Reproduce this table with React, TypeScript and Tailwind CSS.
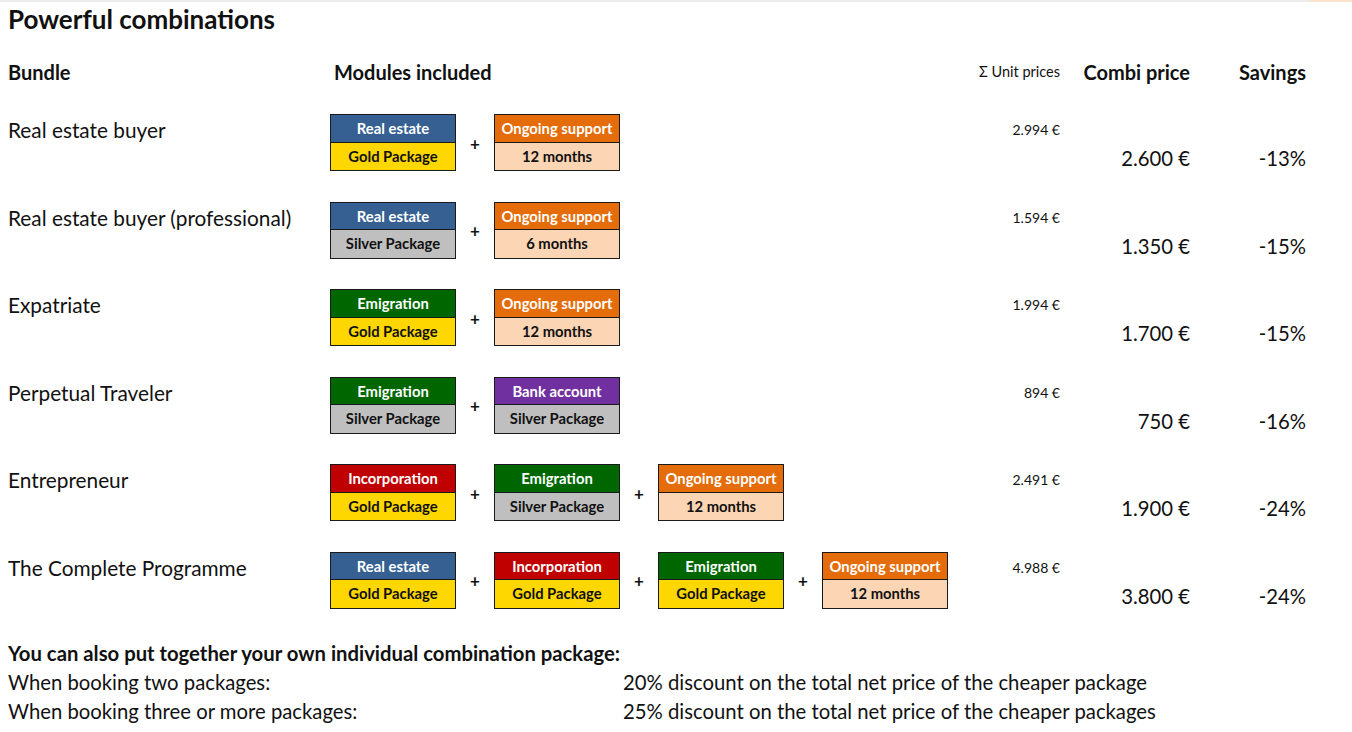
const TOP: Record<string, string> = {
  'Real estate': 'bg-[#366092]',
  'Ongoing support': 'bg-[#e46c0a]',
  Emigration: 'bg-[#006600]',
  'Bank account': 'bg-[#7030a0]',
  Incorporation: 'bg-[#c00000]',
};

const BOTTOM: Record<string, string> = {
  'Gold Package': 'bg-[#ffd700]',
  'Silver Package': 'bg-[#bfbfbf]',
  '12 months': 'bg-[#fcd5b4]',
  '6 months': 'bg-[#fcd5b4]',
};

type Module = [string, string];

type Bundle = {
  name: string;
  modules: Module[];
  unit: string;
  combi: string;
  savings: string;
};

const BUNDLES: Bundle[] = [
  {
    name: 'Real estate buyer',
    modules: [['Real estate', 'Gold Package'], ['Ongoing support', '12 months']],
    unit: '2.994 €',
    combi: '2.600 €',
    savings: '-13%',
  },
  {
    name: 'Real estate buyer (professional)',
    modules: [['Real estate', 'Silver Package'], ['Ongoing support', '6 months']],
    unit: '1.594 €',
    combi: '1.350 €',
    savings: '-15%',
  },
  {
    name: 'Expatriate',
    modules: [['Emigration', 'Gold Package'], ['Ongoing support', '12 months']],
    unit: '1.994 €',
    combi: '1.700 €',
    savings: '-15%',
  },
  {
    name: 'Perpetual Traveler',
    modules: [['Emigration', 'Silver Package'], ['Bank account', 'Silver Package']],
    unit: '894 €',
    combi: '750 €',
    savings: '-16%',
  },
  {
    name: 'Entrepreneur',
    modules: [['Incorporation', 'Gold Package'], ['Emigration', 'Silver Package'], ['Ongoing support', '12 months']],
    unit: '2.491 €',
    combi: '1.900 €',
    savings: '-24%',
  },
  {
    name: 'The Complete Programme',
    modules: [
      ['Real estate', 'Gold Package'],
      ['Incorporation', 'Gold Package'],
      ['Emigration', 'Gold Package'],
      ['Ongoing support', '12 months'],
    ],
    unit: '4.988 €',
    combi: '3.800 €',
    savings: '-24%',
  },
];

function ModuleBox({ top, bottom }: { top: string; bottom: string }) {
  return (
    <div className="w-[126px] border-[1.5px] border-[#1a1a1a] text-[14.8px] font-bold text-center">
      <div className={`${TOP[top]} h-[27.5px] leading-[27px] text-white border-b-[1.5px] border-[#1a1a1a]`}>{top}</div>
      <div className={`${BOTTOM[bottom]} h-[27.5px] leading-[27px] text-[#111]`}>{bottom}</div>
    </div>
  );
}

export default function App() {
  return (
    <div className="w-[1352px] h-[732px] bg-white text-[#111] overflow-hidden" style={{ fontFamily: 'Lato, "Open Sans", sans-serif' }}>
      <div className="flex h-[2px]">
        <div className="flex-1 bg-[#ececec]" />
        <div className="w-[42px] bg-[#fbe3cc]" />
      </div>

      <div className="px-2">
        <h1 className="text-[26px] font-bold leading-[32px] mt-[1px]">Powerful combinations</h1>

        {/* Kopfzeile */}
        <div className="flex items-center h-[28px] mt-[23px] text-[20px] font-bold">
          <div className="w-[322px]">Bundle</div>
          <div className="w-[630px] pl-1">Modules included</div>
          <div className="w-[100px] text-right text-[14.5px] font-normal">Σ Unit prices</div>
          <div className="w-[130px] text-right">Combi price</div>
          <div className="w-[116px] text-right">Savings</div>
        </div>

        <div className="mt-[28px]">
          {BUNDLES.map((b) => (
            <div key={b.name} className="flex items-start h-[87.5px]">
              <div className="w-[322px] text-[20.8px] leading-[29px] pt-[1px]">{b.name}</div>
              <div className="w-[630px] flex items-center">
                {b.modules.map(([top, bottom], idx) => (
                  <div key={idx} className="flex items-center">
                    {idx > 0 && <div className="w-[38px] text-center text-[17px] font-bold pt-[2px]">+</div>}
                    <ModuleBox top={top} bottom={bottom} />
                  </div>
                ))}
              </div>
              <div className="w-[100px] text-right text-[14px] leading-[29px] pt-[1px]">{b.unit}</div>
              <div className="w-[130px] text-right text-[20.3px] leading-[29px] mt-[30px]">{b.combi}</div>
              <div className="w-[116px] text-right text-[20.3px] leading-[29px] mt-[30px]">{b.savings}</div>
            </div>
          ))}
        </div>

        <div className="text-[20.3px] leading-[29px]">
          <div className="font-bold">You can also put together your own individual combination package:</div>
          <div className="flex">
            <div className="w-[615px]">When booking two packages:</div>
            <div>20% discount on the total net price of the cheaper package</div>
          </div>
          <div className="flex">
            <div className="w-[615px]">When booking three or more packages:</div>
            <div>25% discount on the total net price of the cheaper packages</div>
          </div>
        </div>
      </div>
    </div>
  );
}
